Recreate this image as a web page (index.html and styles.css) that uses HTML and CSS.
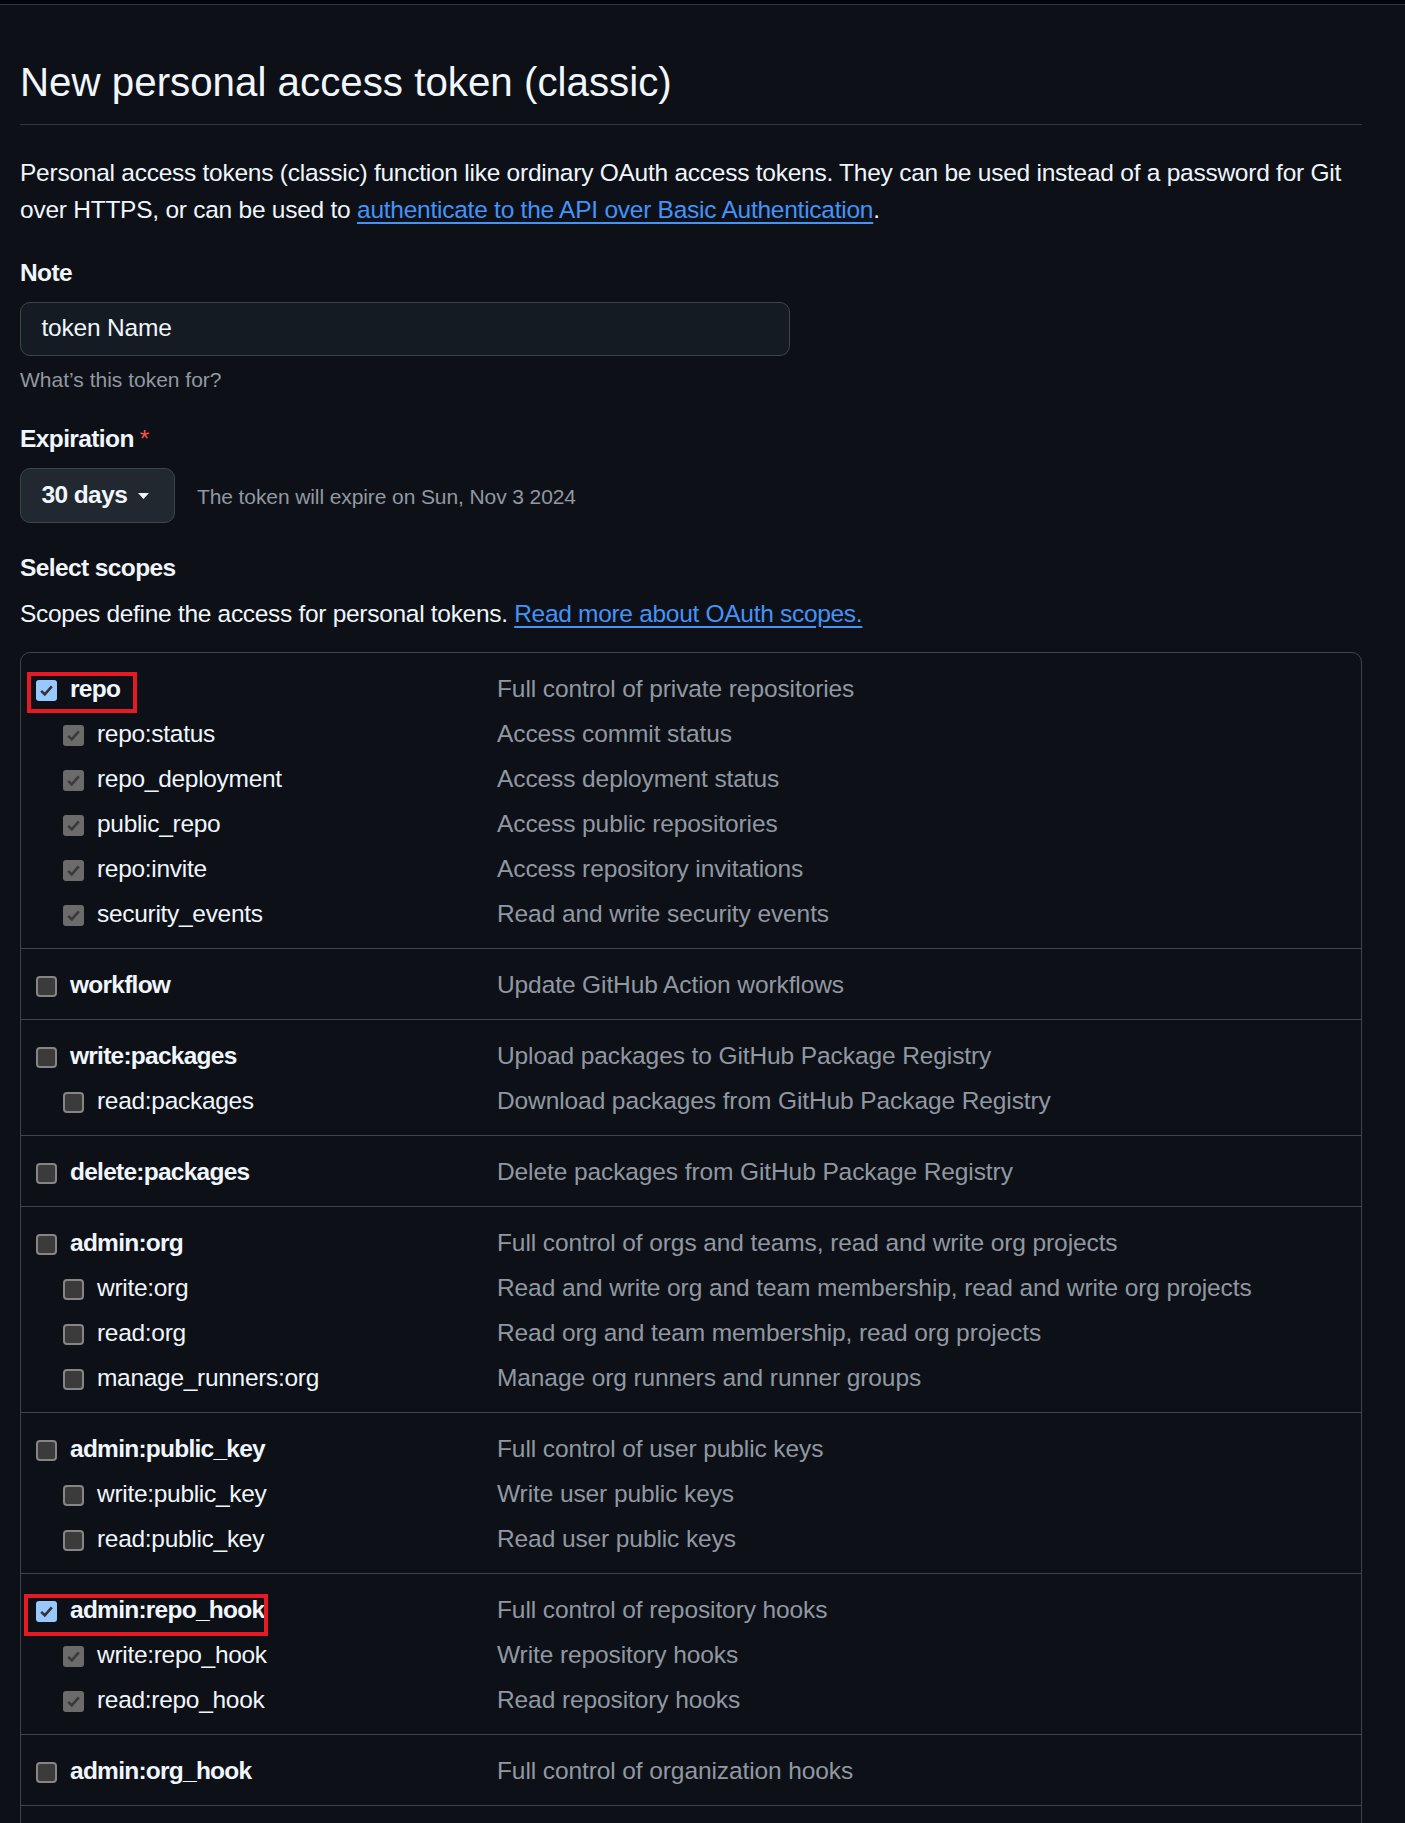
FILE: index.html
```html
<!DOCTYPE html>
<html lang="en">
<head>
<meta charset="utf-8">
<title>New personal access token (classic)</title>
<link rel="stylesheet" href="styles.css">
</head>
<body>
<div class="topbar"></div>
<main class="page">
  <h1 class="title">New personal access token (classic)</h1>
  <p class="intro">Personal access tokens (classic) function like ordinary OAuth access tokens. They can be used instead of a password for Git over HTTPS, or can be used to <a href="#" class="link">authenticate to the API over Basic Authentication</a>.</p>

  <div class="label label-note">Note</div>
  <div class="input">token Name</div>
  <div class="hint">What’s this token for?</div>

  <div class="label label-exp">Expiration<span class="req">*</span></div>
  <div class="exp-row">
    <div class="btn">30 days<svg class="caret" width="11" height="6" viewBox="0 0 11 6"><path d="M0 0 L11 0 L5.5 6 Z" fill="#f0f6fc"/></svg></div>
    <span class="exp-note">The token will expire on Sun, Nov 3 2024</span>
  </div>

  <div class="label label-scopes">Select scopes</div>
  <div class="scopes-text">Scopes define the access for personal tokens. <a href="#" class="link">Read more about OAuth scopes.</a></div>

  <div class="scopes">
    <div class="group">
      <div class="row">
        <div class="lab"><span class="cb on"><svg viewBox="0 0 21 21"><path d="M5.2 10.8 L8.8 14.4 L15.8 6.4" /></svg></span><b>repo</b></div>
        <div class="desc">Full control of private repositories</div>
        <div class="mark mark-repo"></div>
      </div>
      <div class="row sub">
        <div class="lab"><span class="cb dis"><svg viewBox="0 0 21 21"><path d="M5.2 10.8 L8.8 14.4 L15.8 6.4" /></svg></span>repo:status</div>
        <div class="desc">Access commit status</div>
      </div>
      <div class="row sub">
        <div class="lab"><span class="cb dis"><svg viewBox="0 0 21 21"><path d="M5.2 10.8 L8.8 14.4 L15.8 6.4" /></svg></span>repo_deployment</div>
        <div class="desc">Access deployment status</div>
      </div>
      <div class="row sub">
        <div class="lab"><span class="cb dis"><svg viewBox="0 0 21 21"><path d="M5.2 10.8 L8.8 14.4 L15.8 6.4" /></svg></span>public_repo</div>
        <div class="desc">Access public repositories</div>
      </div>
      <div class="row sub">
        <div class="lab"><span class="cb dis"><svg viewBox="0 0 21 21"><path d="M5.2 10.8 L8.8 14.4 L15.8 6.4" /></svg></span>repo:invite</div>
        <div class="desc">Access repository invitations</div>
      </div>
      <div class="row sub">
        <div class="lab"><span class="cb dis"><svg viewBox="0 0 21 21"><path d="M5.2 10.8 L8.8 14.4 L15.8 6.4" /></svg></span>security_events</div>
        <div class="desc">Read and write security events</div>
      </div>
    </div>

    <div class="group">
      <div class="row">
        <div class="lab"><span class="cb"></span><b>workflow</b></div>
        <div class="desc">Update GitHub Action workflows</div>
      </div>
    </div>

    <div class="group">
      <div class="row">
        <div class="lab"><span class="cb"></span><b>write:packages</b></div>
        <div class="desc">Upload packages to GitHub Package Registry</div>
      </div>
      <div class="row sub">
        <div class="lab"><span class="cb"></span>read:packages</div>
        <div class="desc">Download packages from GitHub Package Registry</div>
      </div>
    </div>

    <div class="group">
      <div class="row">
        <div class="lab"><span class="cb"></span><b>delete:packages</b></div>
        <div class="desc">Delete packages from GitHub Package Registry</div>
      </div>
    </div>

    <div class="group">
      <div class="row">
        <div class="lab"><span class="cb"></span><b>admin:org</b></div>
        <div class="desc">Full control of orgs and teams, read and write org projects</div>
      </div>
      <div class="row sub">
        <div class="lab"><span class="cb"></span>write:org</div>
        <div class="desc">Read and write org and team membership, read and write org projects</div>
      </div>
      <div class="row sub">
        <div class="lab"><span class="cb"></span>read:org</div>
        <div class="desc">Read org and team membership, read org projects</div>
      </div>
      <div class="row sub">
        <div class="lab"><span class="cb"></span>manage_runners:org</div>
        <div class="desc">Manage org runners and runner groups</div>
      </div>
    </div>

    <div class="group">
      <div class="row">
        <div class="lab"><span class="cb"></span><b>admin:public_key</b></div>
        <div class="desc">Full control of user public keys</div>
      </div>
      <div class="row sub">
        <div class="lab"><span class="cb"></span>write:public_key</div>
        <div class="desc">Write user public keys</div>
      </div>
      <div class="row sub">
        <div class="lab"><span class="cb"></span>read:public_key</div>
        <div class="desc">Read user public keys</div>
      </div>
    </div>

    <div class="group">
      <div class="row">
        <div class="lab"><span class="cb on"><svg viewBox="0 0 21 21"><path d="M5.2 10.8 L8.8 14.4 L15.8 6.4" /></svg></span><b>admin:repo_hook</b></div>
        <div class="desc">Full control of repository hooks</div>
        <div class="mark mark-hook"></div>
      </div>
      <div class="row sub">
        <div class="lab"><span class="cb dis"><svg viewBox="0 0 21 21"><path d="M5.2 10.8 L8.8 14.4 L15.8 6.4" /></svg></span>write:repo_hook</div>
        <div class="desc">Write repository hooks</div>
      </div>
      <div class="row sub">
        <div class="lab"><span class="cb dis"><svg viewBox="0 0 21 21"><path d="M5.2 10.8 L8.8 14.4 L15.8 6.4" /></svg></span>read:repo_hook</div>
        <div class="desc">Read repository hooks</div>
      </div>
    </div>

    <div class="group">
      <div class="row">
        <div class="lab"><span class="cb"></span><b>admin:org_hook</b></div>
        <div class="desc">Full control of organization hooks</div>
      </div>
    </div>

    <div class="group">
      <div class="row">
        <div class="lab"><span class="cb"></span><b>gist</b></div>
        <div class="desc">Create gists</div>
      </div>
    </div>
  </div>
</main>
</body>
</html>
```

FILE: styles.css
```css
* { box-sizing: border-box; }

html, body {
  margin: 0;
  padding: 0;
  background: #0d1117;
}

body {
  font-family: "Liberation Sans", Arial, sans-serif;
  font-size: 24.5px;
  line-height: 36.75px;
  color: #f0f6fc;
}

.topbar {
  height: 5px;
  background: #010409;
  border-bottom: 1px solid #30363d;
}

.page {
  width: 1362px;
  padding-left: 20px;
  padding-bottom: 40px;
}

.title {
  margin: 53px 0 0;
  font-size: 40.3px;
  line-height: 50px;
  font-weight: 400;
  padding-bottom: 16px;
  border-bottom: 1px solid #30363d;
}

.intro {
  margin: 30px 0 0;
  letter-spacing: -0.25px;
}

.link {
  color: #4493f8;
  text-decoration: underline;
  text-underline-offset: 4px;
}

.label {
  font-weight: 700;
  letter-spacing: -0.6px;
}

.label-note { margin-top: 26.5px; }
.label-exp { margin-top: 25.5px; }
.label-scopes { margin-top: 27px; }

.req {
  color: #f85149;
  margin-left: 6px;
  font-weight: 400;
}

.input {
  margin-top: 10px;
  width: 770px;
  height: 54px;
  border: 1px solid #3d444d;
  border-radius: 10px;
  background: #151b23;
  padding: 0 20.5px;
  display: flex;
  align-items: center;
  letter-spacing: -0.2px;
}

.hint {
  margin-top: 8px;
  font-size: 21px;
  line-height: 31.5px;
  color: #9198a1;
}

.exp-row {
  margin-top: 10.5px;
  display: flex;
  align-items: center;
  gap: 22px;
}

.btn {
  height: 55px;
  width: 155px;
  border: 1px solid #3d444d;
  border-radius: 10px;
  background: #212830;
  padding: 0 0 0 20.5px;
  display: flex;
  align-items: center;
  gap: 11px;
  font-weight: 700;
  letter-spacing: -0.6px;
}

.caret { display: block; margin-top: 1px; }

.exp-note {
  font-size: 21px;
  line-height: 31.5px;
  color: #9198a1;
  margin-top: 2px;
  letter-spacing: -0.1px;
}

.scopes-text {
  margin-top: 9px;
  letter-spacing: -0.3px;
}

.scopes {
  margin-top: 19.5px;
  width: 1342px;
  border: 1px solid #3d444d;
  border-radius: 10px;
}

.group {
  padding: 13.5px 0 11.5px;
}

.group + .group {
  border-top: 1px solid #3d444d;
}

.row {
  position: relative;
  height: 45px;
  display: flex;
  align-items: center;
}

.lab {
  width: 476px;
  flex: none;
  padding-left: 15px;
  display: flex;
  align-items: center;
  letter-spacing: -0.3px;
}

.row.sub .lab {
  padding-left: 42px;
}

.lab b {
  font-weight: 700;
  letter-spacing: -0.75px;
}

.desc {
  color: #9198a1;
  letter-spacing: -0.1px;
}

.cb {
  flex: none;
  width: 21px;
  height: 21px;
  margin-right: 13px;
  margin-top: 2px;
  border-radius: 4px;
  background: #3b3b3b;
  border: 2px solid #858585;
}

.cb svg {
  display: block;
  width: 21px;
  height: 21px;
}

.cb path {
  fill: none;
  stroke: #333333;
  stroke-width: 2.6;
}

.cb.on {
  background: #99c8ff;
  border: 0;
  border-radius: 3px;
}

.cb.dis {
  background: #6b6b6b;
  border: 0;
  border-radius: 3px;
}

.cb.dis path { stroke: #3a3a3a; }

.mark {
  position: absolute;
  border: 4px solid #e51a22;
}

.mark-repo {
  left: 6px;
  top: 5.5px;
  width: 110px;
  height: 41px;
}

.mark-hook {
  left: 3px;
  top: 6.5px;
  width: 244px;
  height: 42px;
}
```
